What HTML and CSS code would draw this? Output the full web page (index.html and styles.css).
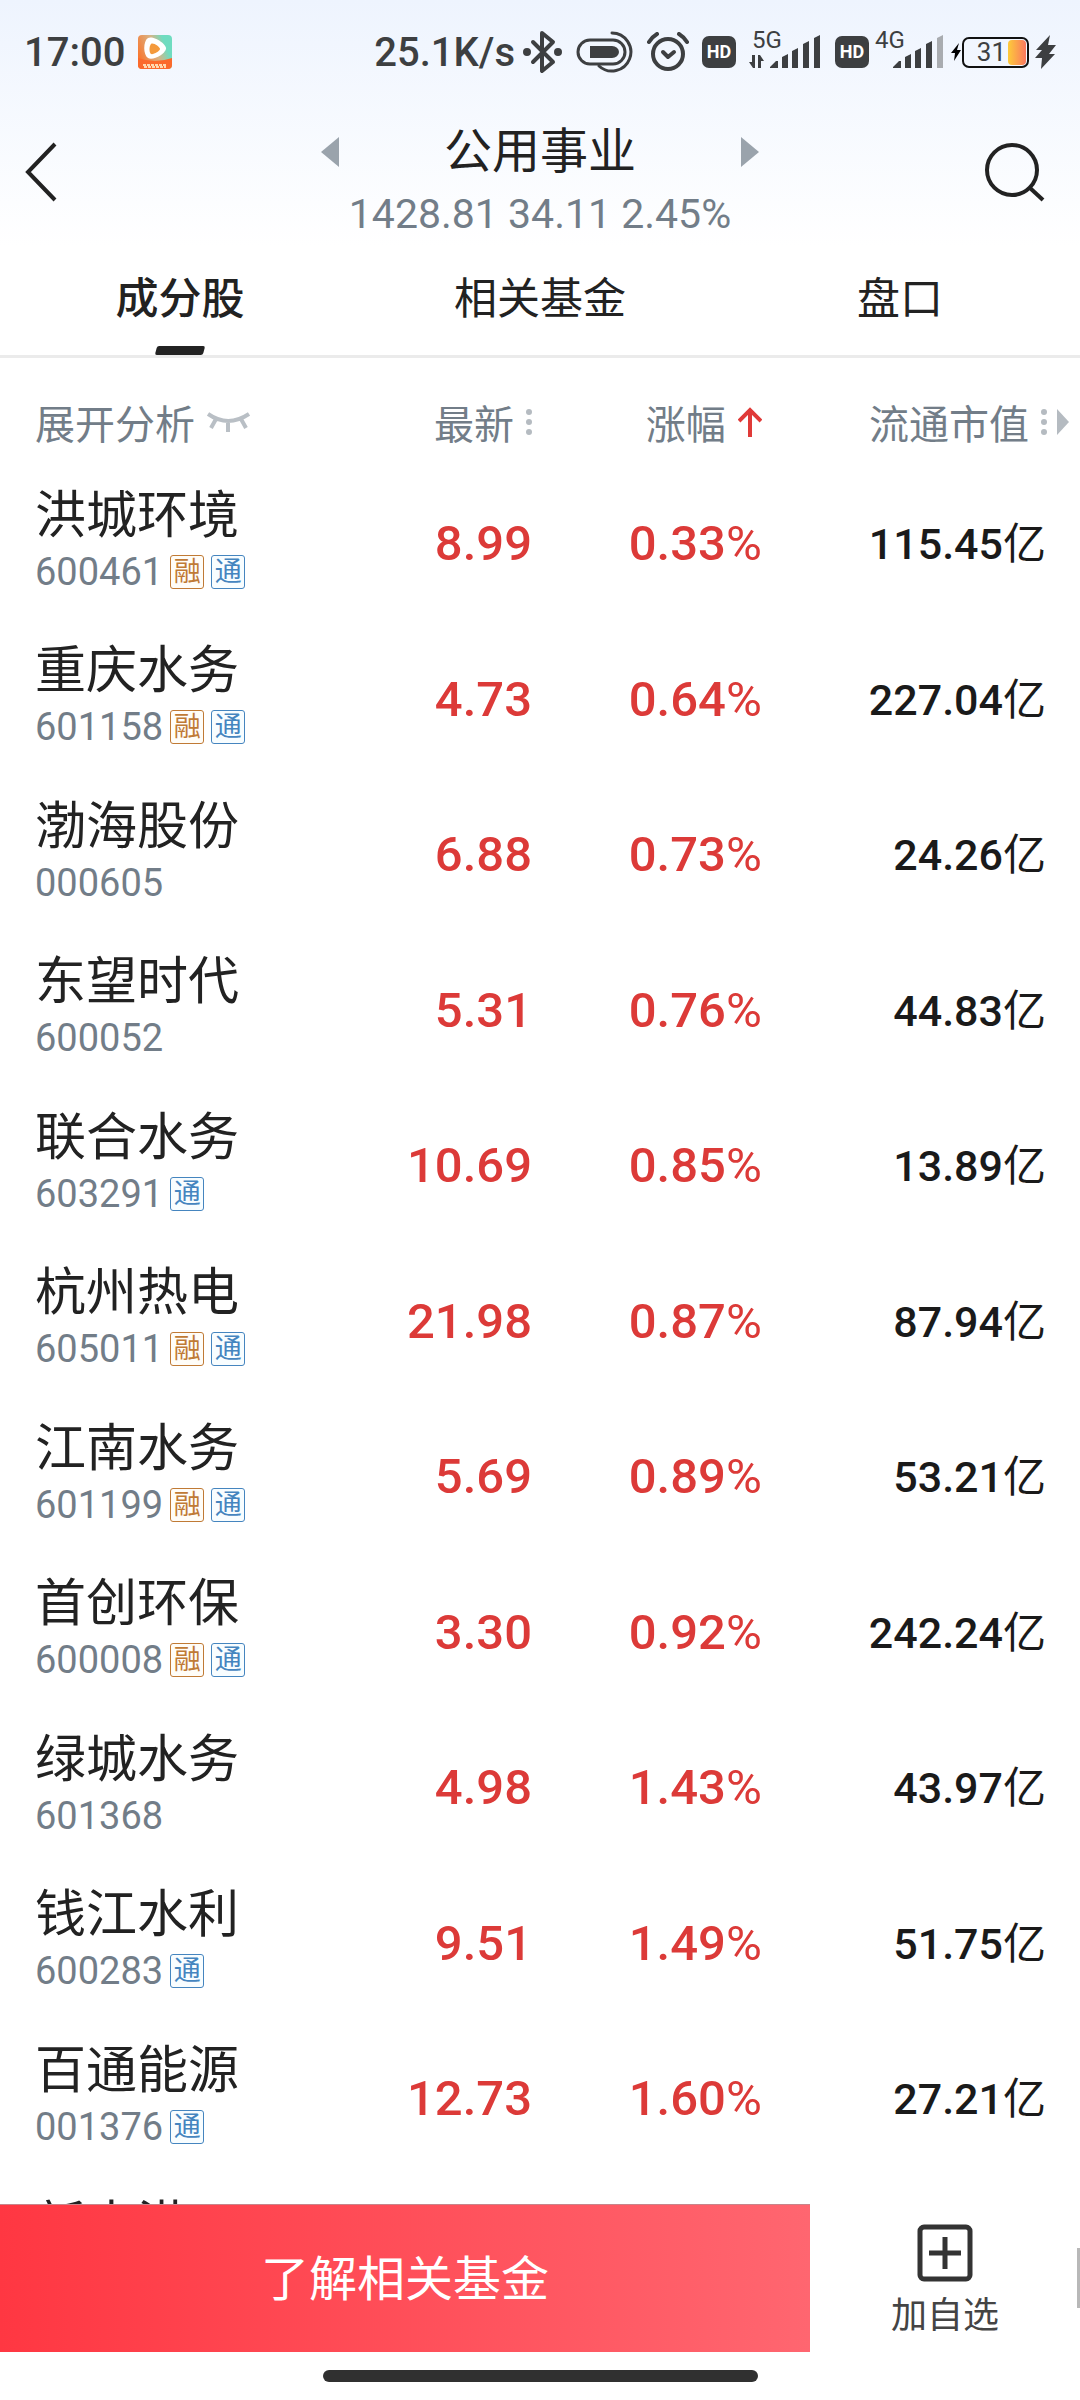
FILE: index.html
```
<!DOCTYPE html>
<html lang="zh-CN">
<head>
    <meta charset="UTF-8">
    <meta name="viewport" content="width=device-width, initial-scale=1.0">
    <title>公用事业</title>
    <link rel="stylesheet" href="styles.css">
</head>
<body>
    <div class="top">
        <div class="status-bar">
            <span class="time">17:00</span>
            <svg class="app-icon" width="34" height="34" viewBox="0 0 34 34">
                <defs>
                    <linearGradient id="appBg" x1="0" y1="0.6" x2="1" y2="0.2">
                        <stop offset="0" stop-color="#f9772f"/>
                        <stop offset="0.5" stop-color="#d9b384"/>
                        <stop offset="0.8" stop-color="#6fdcc0"/>
                    </linearGradient>
                </defs>
                <rect width="34" height="34" rx="4" fill="url(#appBg)"/>
                <path d="M0 23Q17 29 34 23V30a4 4 0 0 1-4 4H4a4 4 0 0 1-4-4z" fill="#fb6a2c"/>
                <path d="M10 3C15 0 29 9 28 14C27 19 15 26 10 23C5 20 5 6 10 3z" fill="#fff"/>
                <path d="M13 9C15 7 22 12 22 14C22 16 15 20 13 19C11 18 11 11 13 9z" fill="#f49a3c"/>
                <path d="M5 30h24M6 32h22" stroke="#ffd9b0" stroke-width="2" stroke-dasharray="3 1"/>
            </svg>
            <span class="speed">25.1K/s</span>
            <svg class="bluetooth" width="40" height="44" viewBox="0 0 40 44" fill="none" stroke="#3d3f41" stroke-width="4" stroke-linejoin="round" stroke-linecap="round">
                <path d="M10 12L30 32L19 41V3L30 12L10 32"/>
                <circle cx="4" cy="22" r="2" fill="#3d3f41"/>
                <circle cx="35" cy="22" r="2" fill="#3d3f41"/>
            </svg>
            <svg class="pill" width="58" height="42" viewBox="0 0 58 42" fill="none" stroke="#3d3f41" stroke-width="3">
                <rect x="2" y="9" width="47" height="24" rx="12"/>
                <path d="M14 15h22a7 6 0 0 1 0 12H14z" fill="#3d3f41" stroke="none"/>
                <path d="M36 2a19 19 0 1 1-13 33" stroke-linecap="round"/>
            </svg>
            <svg class="alarm" width="42" height="40" viewBox="0 0 42 40" fill="none" stroke="#3d3f41" stroke-width="4" stroke-linecap="round" stroke-linejoin="round">
                <circle cx="21" cy="22" r="15"/>
                <path d="M16 20l5 5l6-5"/>
                <path d="M2 10Q5 5 10 2M40 10Q37 5 32 2"/>
            </svg>
            <span class="hd">HD</span>
            <span class="signal">
                <span class="net">5G</span>
                <svg width="73" height="34" viewBox="0 0 73 34" fill="#3d3f41">
                    <path d="M3 20h3v13h-2l-4-6h3zM9 33v-13h2l4 6h-3v7z"/>
                    <path d="M21 32l6-6h2v7h-8zM33 22l6-3v14h-6zM43 16l6-3v20h-6zM54 9l6-3v27h-6zM65 3l6-3v33h-6z"/>
                </svg>
            </span>
            <span class="hd">HD</span>
            <span class="signal signal-4g">
                <span class="net">4G</span>
                <svg width="73" height="34" viewBox="0 0 73 34" fill="#3d3f41">
                    <path d="M21 32l6-6h2v7h-8zM33 22l6-3v14h-6zM43 16l6-3v20h-6zM54 9l6-3v27h-6z"/>
                    <path d="M65 3l6-3v33h-6z" fill="#a9acb0"/>
                </svg>
            </span>
            <svg class="bolt-small" width="10" height="18" viewBox="0 0 10 18"><path d="M8 0L0 10h4L3 18L10 7H6z" fill="#000"/></svg>
            <span class="battery">31<i class="charge"></i></span>
            <svg class="bolt" width="21" height="34" viewBox="0 0 21 34"><path d="M15 0L1 15h6L0 23h7L6 34L20 19h-6L21 10h-8z" fill="#3d3f41"/></svg>
        </div>

        <header class="title-bar">
            <button class="icon-btn" aria-label="返回">
                <svg width="34" height="60" viewBox="0 0 34 60" fill="none" stroke="#222" stroke-width="4"><path d="M31 2L4 30L31 58"/></svg>
            </button>
            <div class="title">
                <button class="icon-btn" aria-label="上一个">
                    <svg width="18" height="30" viewBox="0 0 18 30"><path d="M18 0v30L0 15z" fill="#9aa3ac"/></svg>
                </button>
                <h1>公用事业</h1>
                <button class="icon-btn" aria-label="下一个">
                    <svg width="18" height="30" viewBox="0 0 18 30"><path d="M0 0v30L18 15z" fill="#9aa3ac"/></svg>
                </button>
                <p class="index">1428.81 34.11 2.45%</p>
            </div>
            <button class="icon-btn" aria-label="搜索">
                <svg width="62" height="60" viewBox="0 0 62 60" fill="none" stroke="#222" stroke-width="4"><circle cx="28" cy="28" r="25"/><path d="M46 46L59 58"/></svg>
            </button>
        </header>
    </div>

    <nav class="tabs">
        <button class="tab active">成分股</button>
        <button class="tab">相关基金</button>
        <button class="tab">盘口</button>
    </nav>

    <main class="list">
        <table class="stocks">
            <thead>
                <tr>
                    <th class="col-name">
                        <button class="sort">展开分析
                            <svg class="eye" width="43" height="22" viewBox="0 0 43 22" fill="none" stroke="#b9bfc5" stroke-width="4"><path d="M1 3Q21 17 42 3M9 8L4 17M21 11v10M34 8l5 9"/></svg>
                        </button>
                    </th>
                    <th class="col-price">
                        <button class="sort">最新
                            <svg class="dots" width="6" height="28" viewBox="0 0 6 28" fill="#b5bbc1"><circle cx="3" cy="4" r="3"/><circle cx="3" cy="14" r="3"/><circle cx="3" cy="24" r="3"/></svg>
                        </button>
                    </th>
                    <th class="col-change">
                        <button class="sort">涨幅
                            <svg class="up" width="24" height="30" viewBox="0 0 24 30" fill="none" stroke="#e03a38" stroke-width="4"><path d="M12 30V3M1 14L12 3L23 14"/></svg>
                        </button>
                    </th>
                    <th class="col-cap">
                        <button class="sort">流通市值
                            <svg class="dots" width="28" height="28" viewBox="0 0 28 28" fill="#b5bbc1"><circle cx="3" cy="4" r="3"/><circle cx="3" cy="14" r="3"/><circle cx="3" cy="24" r="3"/><path d="M16 1v26l12-13z"/></svg>
                        </button>
                    </th>
                </tr>
            </thead>
            <tbody>
                <tr>
                    <td><div class="name">洪城环境</div><div class="code">600461<span class="tag rong">融</span><span class="tag tong">通</span></div></td>
                    <td class="num">8.99</td><td class="num">0.33<span class="unit">%</span></td><td class="cap">115.45<span class="unit">亿</span></td>
                </tr>
                <tr>
                    <td><div class="name">重庆水务</div><div class="code">601158<span class="tag rong">融</span><span class="tag tong">通</span></div></td>
                    <td class="num">4.73</td><td class="num">0.64<span class="unit">%</span></td><td class="cap">227.04<span class="unit">亿</span></td>
                </tr>
                <tr>
                    <td><div class="name">渤海股份</div><div class="code">000605</div></td>
                    <td class="num">6.88</td><td class="num">0.73<span class="unit">%</span></td><td class="cap">24.26<span class="unit">亿</span></td>
                </tr>
                <tr>
                    <td><div class="name">东望时代</div><div class="code">600052</div></td>
                    <td class="num">5.31</td><td class="num">0.76<span class="unit">%</span></td><td class="cap">44.83<span class="unit">亿</span></td>
                </tr>
                <tr>
                    <td><div class="name">联合水务</div><div class="code">603291<span class="tag tong">通</span></div></td>
                    <td class="num">10.69</td><td class="num">0.85<span class="unit">%</span></td><td class="cap">13.89<span class="unit">亿</span></td>
                </tr>
                <tr>
                    <td><div class="name">杭州热电</div><div class="code">605011<span class="tag rong">融</span><span class="tag tong">通</span></div></td>
                    <td class="num">21.98</td><td class="num">0.87<span class="unit">%</span></td><td class="cap">87.94<span class="unit">亿</span></td>
                </tr>
                <tr>
                    <td><div class="name">江南水务</div><div class="code">601199<span class="tag rong">融</span><span class="tag tong">通</span></div></td>
                    <td class="num">5.69</td><td class="num">0.89<span class="unit">%</span></td><td class="cap">53.21<span class="unit">亿</span></td>
                </tr>
                <tr>
                    <td><div class="name">首创环保</div><div class="code">600008<span class="tag rong">融</span><span class="tag tong">通</span></div></td>
                    <td class="num">3.30</td><td class="num">0.92<span class="unit">%</span></td><td class="cap">242.24<span class="unit">亿</span></td>
                </tr>
                <tr>
                    <td><div class="name">绿城水务</div><div class="code">601368</div></td>
                    <td class="num">4.98</td><td class="num">1.43<span class="unit">%</span></td><td class="cap">43.97<span class="unit">亿</span></td>
                </tr>
                <tr>
                    <td><div class="name">钱江水利</div><div class="code">600283<span class="tag tong">通</span></div></td>
                    <td class="num">9.51</td><td class="num">1.49<span class="unit">%</span></td><td class="cap">51.75<span class="unit">亿</span></td>
                </tr>
                <tr>
                    <td><div class="name">百通能源</div><div class="code">001376<span class="tag tong">通</span></div></td>
                    <td class="num">12.73</td><td class="num">1.60<span class="unit">%</span></td><td class="cap">27.21<span class="unit">亿</span></td>
                </tr>
                <tr>
                    <td><div class="name">新中港</div><div class="code"></div></td>
                    <td class="num"></td><td class="num"></td><td class="cap"></td>
                </tr>
            </tbody>
        </table>
    </main>

    <footer class="bottom">
        <div class="actions">
            <button class="fund-btn">了解相关基金</button>
            <button class="add-btn">
                <svg width="56" height="58" viewBox="0 0 56 58" fill="none" stroke="#333" stroke-width="5"><rect x="3" y="3" width="50" height="52" rx="4"/><path d="M12 29h32M28 13v32"/></svg>
                加自选
            </button>
            <i class="drawer"></i>
        </div>
        <div class="home-bar"></div>
    </footer>
</body>
</html>
```
FILE: styles.css
```
* {
    box-sizing: border-box;
}

body {
    margin: 0;
    height: 100vh;
    display: flex;
    flex-direction: column;
    overflow: hidden;
    background: #fff;
    color: #222;
    font-family: Roboto, "Noto Sans CJK SC", sans-serif;
}

button {
    margin: 0;
    padding: 0;
    border: none;
    background: none;
    color: inherit;
    font: inherit;
    cursor: pointer;
}

svg {
    display: block;
    flex: none;
}

.top {
    background: linear-gradient(#eef4fe, #fff);
}

/* status bar */
.status-bar {
    display: flex;
    align-items: center;
    height: 104px;
    padding: 0 24px;
    color: #3d3f41;
    font-size: 40px;
    font-weight: 500;
}

.app-icon {
    margin-left: 13px;
}

.speed {
    margin-left: auto;
}

.bluetooth {
    margin-left: 8px;
}

.pill,
.alarm,
.hd {
    margin-left: 13px;
}

.hd {
    width: 34px;
    height: 32px;
    border-radius: 7px;
    background: #3d3f41;
    color: #fff;
    font-size: 18px;
    font-weight: 700;
    line-height: 32px;
    text-align: center;
}

.signal {
    position: relative;
    margin-left: 13px;
}

.signal-4g {
    margin-left: 3px;
}

.net {
    position: absolute;
    top: -7px;
    left: 3px;
    font-size: 24px;
    font-weight: 400;
    line-height: 24px;
}

.bolt-small {
    margin-left: 6px;
}

.battery {
    display: flex;
    align-items: center;
    justify-content: flex-end;
    gap: 2px;
    width: 67px;
    height: 31px;
    padding-right: 1px;
    margin-left: 1px;
    border: 2px solid #111;
    border-radius: 7px;
    font-size: 26px;
    font-weight: 400;
}

.charge {
    width: 18px;
    height: 25px;
    border-radius: 4px;
    background: linear-gradient(90deg, #fdcb3a, #fa7860);
}

.bolt {
    margin-left: 6px;
}

/* title */
.title-bar {
    display: flex;
    justify-content: space-between;
    height: 142px;
    padding: 16px 24px 0;
}

.title-bar > .icon-btn {
    width: 72px;
    height: 104px;
    display: flex;
    align-items: center;
}

.title {
    display: grid;
    grid-template-columns: 18px 1fr 18px;
    grid-template-rows: 64px 60px;
    align-items: center;
    width: 438px;
}

.title h1 {
    margin: 0;
    font-size: 48px;
    font-weight: 400;
    line-height: 64px;
    text-align: center;
}

.index {
    grid-column: 1 / -1;
    margin: 0;
    color: #727d88;
    font-size: 41px;
    line-height: 60px;
    text-align: center;
}

/* tabs */
.tabs {
    display: grid;
    grid-template-columns: repeat(3, 1fr);
    height: 112px;
    border-bottom: 3px solid #ebebeb;
}

.tab {
    position: relative;
    padding-bottom: 12px;
    font-size: 43px;
}

.tab.active {
    font-weight: 500;
}

.tab.active::after {
    content: '';
    position: absolute;
    left: 50%;
    bottom: 0;
    width: 48px;
    height: 9px;
    margin-left: -24px;
    background: #222;
    border-radius: 2px;
    transform: skewX(-15deg);
}

/* stock table */
.list {
    flex: 1;
    min-height: 0;
    overflow: hidden;
}

.stocks {
    width: 100%;
    border-collapse: collapse;
    table-layout: fixed;
}

.stocks th {
    height: 108px;
    padding: 20px 0 0;
    color: #727d88;
    font-size: 40px;
    font-weight: 400;
    text-align: right;
}

.stocks td {
    height: 155px;
    padding: 0;
    text-align: right;
}

.stocks tr:nth-child(even) td {
    height: 156px;
}

.stocks th:first-child,
.stocks td:first-child {
    padding-left: 35px;
    text-align: left;
}

.stocks td:first-child {
    padding-bottom: 4px;
}

.col-name {
    width: 30%;
}

.col-price {
    width: 20%;
}

.col-change {
    width: 21%;
}

.col-cap {
    width: 29%;
}

.sort {
    display: inline-flex;
    align-items: center;
    gap: 12px;
    vertical-align: middle;
    white-space: nowrap;
}

.stocks th:nth-child(2),
.stocks td:nth-child(2) {
    padding-right: 8px;
}

.stocks th:nth-child(3),
.stocks td:nth-child(3) {
    padding-right: 5px;
}

.stocks th:nth-child(4) {
    padding-right: 11px;
}

.stocks td:nth-child(4) {
    padding-right: 34px;
    padding-bottom: 7px;
}

.name {
    font-size: 51px;
    line-height: 60px;
}

.code {
    display: flex;
    align-items: center;
    gap: 7px;
    height: 52px;
    color: #727d88;
    font-size: 38px;
}

.tag {
    width: 34px;
    height: 34px;
    border: 1px solid;
    border-radius: 3px;
    font-size: 27px;
    line-height: 32px;
    text-align: center;
}

.rong {
    color: #c07a35;
    background: #fffdf8;
}

.tong {
    color: #4585bf;
    background: #f8fdff;
}

.num {
    color: #dc3a38;
    font-size: 49px;
    font-weight: 500;
}

.cap {
    color: #1a1a1a;
    font-size: 43px;
    font-weight: 500;
}

.unit {
    font-weight: 400;
}

/* bottom */
.bottom {
    background: #fff;
}

.actions {
    position: relative;
    display: flex;
    height: 148px;
}

.fund-btn {
    width: 75%;
    padding-bottom: 8px;
    border-top: 1px solid #c8848a;
    background: linear-gradient(90deg, #ff3742, #ff6670);
    color: #fff;
    font-size: 48px;
}

.add-btn {
    flex: 1;
    display: flex;
    flex-direction: column;
    align-items: center;
    justify-content: center;
    gap: 8px;
    padding-top: 10px;
    color: #444;
    font-size: 36px;
    line-height: 52px;
}

.drawer {
    position: absolute;
    right: 0;
    top: 44px;
    width: 3px;
    height: 60px;
    background: #b8b8b8;
}

.home-bar {
    width: 435px;
    height: 12px;
    margin: 18px auto;
    border-radius: 6px;
    background: #303030;
}
```
